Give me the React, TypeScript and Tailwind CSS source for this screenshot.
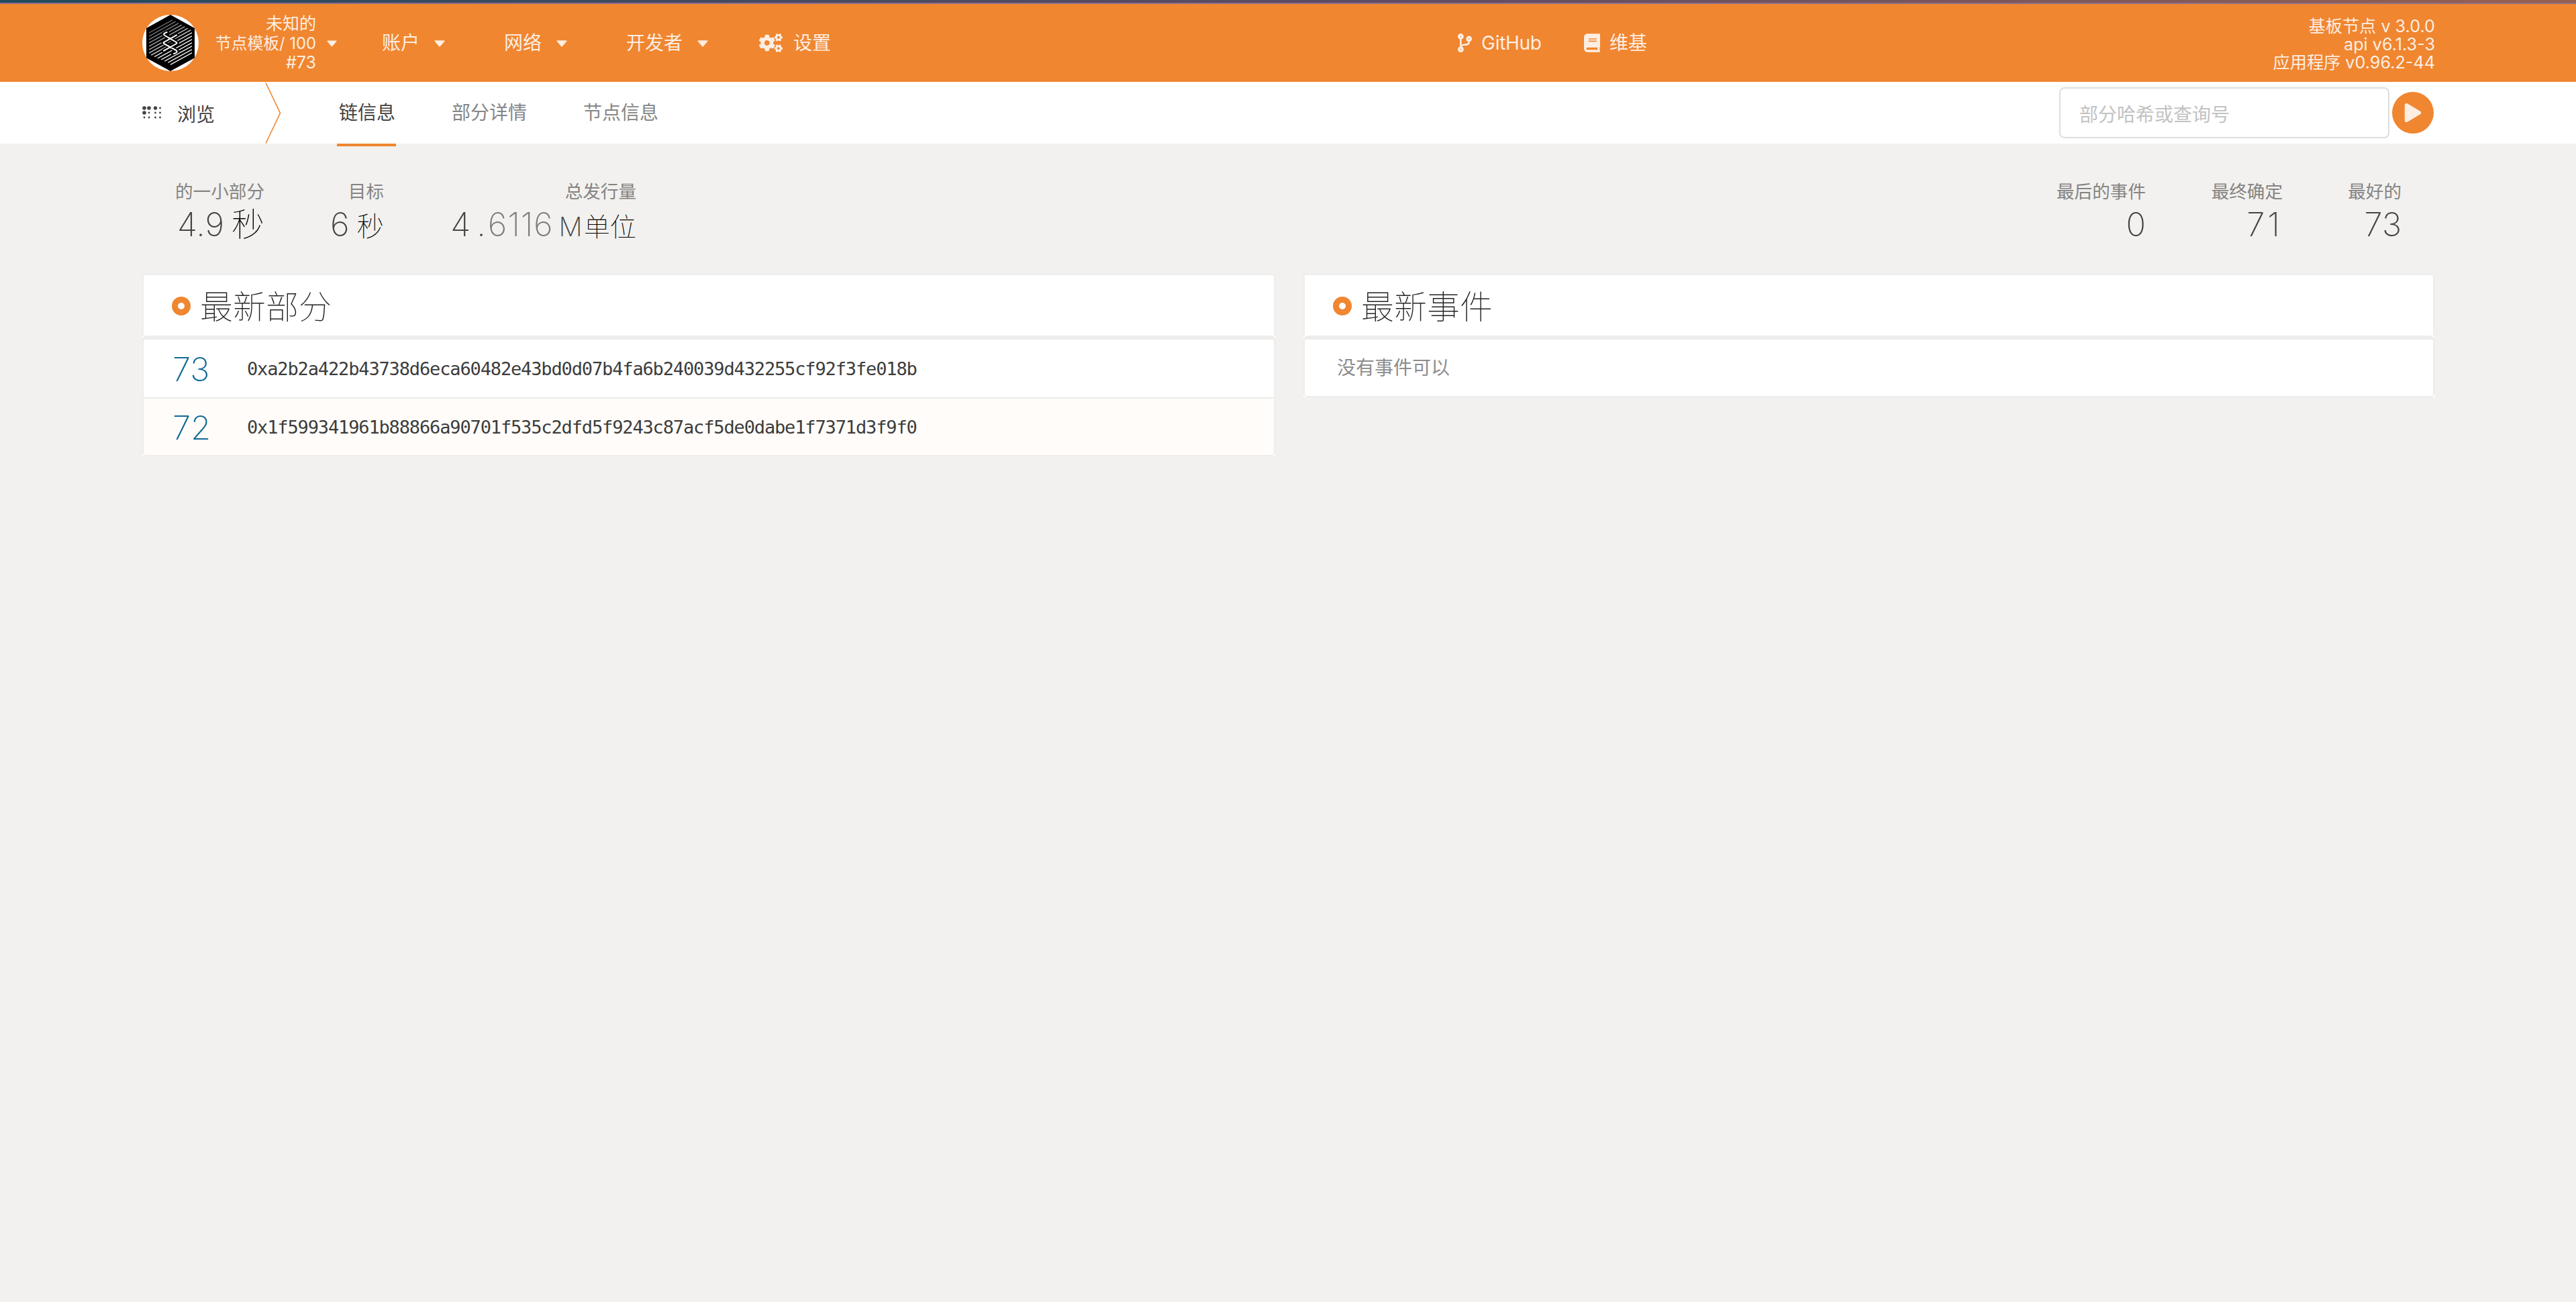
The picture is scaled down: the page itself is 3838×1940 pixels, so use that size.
import type { ReactNode } from "react";
import { FaBook, FaCodeBranch, FaCogs, FaPlay } from "react-icons/fa";

const tabs = [
  { name: "链信息", active: true },
  { name: "部分详情", active: false },
  { name: "节点信息", active: false },
];

const blocks = [
  { number: 73, hash: "0xa2b2a422b43738d6eca60482e43bd0d07b4fa6b240039d432255cf92f3fe018b" },
  { number: 72, hash: "0x1f599341961b88866a90701f535c2dfd5f9243c87acf5de0dabe1f7371d3f9f0" },
];

const brailleDots = [
  [3, 3, 2.8],
  [10, 3, 2.8],
  [19.5, 3, 2.7],
  [26.5, 3, 1.4],
  [3, 10, 2.8],
  [10, 10, 1.4],
  [19.5, 10, 1.4],
  [26.5, 10, 1.4],
  [3, 17, 1.4],
  [10, 17, 1.4],
  [19.5, 17, 1.4],
  [26.5, 17, 1.4],
];

function NodeLogo() {
  const stripes = Array.from({ length: 18 }, (_, i) => 17 + i * 5);
  return (
    <svg className="size-[84px] shrink-0" viewBox="0 0 84 84" fill="none">
      <defs>
        <clipPath id="hex">
          <path d="M42 6 74 23.5V59L42 77.5V73L10 59V23.5Z" />
        </clipPath>
        <linearGradient id="fade" x1="18" y1="8" x2="44" y2="50" gradientUnits="userSpaceOnUse">
          <stop offset="0" stopColor="#333" />
          <stop offset="1" stopColor="#fff" />
        </linearGradient>
      </defs>
      <circle cx="42" cy="42" r="42" fill="#fff" />
      <path d="M42 0 78 20V64.3L42 84 6 64.3V20Z" fill="#000" />
      <g clipPath="url(#hex)" stroke="url(#fade)" strokeWidth="1.3">
        {stripes.map((y) => (
          <path key={y} d={`M8 ${y + 1}L76 ${y - 36.4}`} />
        ))}
      </g>
      <g strokeLinecap="round" strokeLinejoin="round">
        <path
          d="M36.7 26 31.7 28.7 51.7 41.7 31.7 53.7M51 30.3 31.7 41.7 52 54.3 46 57.7"
          stroke="#000"
          strokeWidth="6"
        />
        <path
          d="M36.7 26 Q30 28 33 30.5L50 40.5Q53 42 50 43.5L32 53.7M51 30.3 33 40.5Q30 42 33 43.5L50.5 53Q54 56 47 58"
          stroke="#fff"
          strokeWidth="2"
        />
      </g>
    </svg>
  );
}

function Caret({ className }: { className: string }) {
  return (
    <svg className={className} viewBox="0 0 16 10" fill="currentColor" stroke="currentColor">
      <path d="M1.2 1h13.6L8 9Z" strokeWidth="1.4" strokeLinejoin="round" />
    </svg>
  );
}

function MenuItem({ label, className }: { label: string; className: string }) {
  return (
    <div className={`flex items-center ${className}`}>
      <span>{label}</span>
      <Caret className="ml-[22px] mt-0.5 w-4 h-2.5" />
    </div>
  );
}

function Stat({ label, className, children }: { label: string; className: string; children: ReactNode }) {
  return (
    <div className={`flex flex-col items-end whitespace-nowrap ${className}`}>
      <div className="text-[26.6px] leading-[30px] text-[#858483]">{label}</div>
      <div className="mt-[5px] flex items-baseline text-[49px] leading-[60px] font-extralight text-[#444]">
        {children}
      </div>
    </div>
  );
}

function Panel({ title, className, children }: { title: string; className: string; children: ReactNode }) {
  return (
    <section className={`bg-white ${className}`}>
      <header className="flex h-[92px] items-center border-x-2 border-t-2 border-[#eeedeb] pt-0.5 pl-[42px]">
        <span className="size-7 rounded-full border-[9.5px] border-[#f08630]" />
        <h1 className="ml-[14px] pt-[3px] text-[49px] leading-[60px] font-thin text-[#222]">{title}</h1>
      </header>
      <div className="overflow-hidden rounded-md border-2 border-t-[6px] border-[#eeedeb]">{children}</div>
    </section>
  );
}

export default function App() {
  return (
    <div className="h-[1940px] w-[3838px] overflow-hidden bg-[#f2f1ef] font-['Inter','Noto_Sans_CJK_SC',sans-serif] text-[28px] leading-8 text-[#4e4e4e]">
      <div className="h-1 bg-linear-to-r from-[#1f4a5c] via-[#5c4a64] to-[#96604f]" />
      <div className="h-0.5 bg-[#8f7089]" />

      <header className="flex h-[116px] items-center bg-[#f08630] pr-[210px] pl-[212px] whitespace-nowrap text-[#feeee2]">
        <NodeLogo />
        <div className="w-[175px] text-right text-[25px] leading-[29px]">
          <div>未知的</div>
          <div className="text-[23.8px]">节点模板/ 100</div>
          <div>#73</div>
        </div>
        <Caret className="ml-4 mt-0.5 w-[15px] h-2.5" />
        <MenuItem label="账户" className="ml-[67px]" />
        <MenuItem label="网络" className="ml-[88px]" />
        <MenuItem label="开发者" className="ml-[88px]" />
        <div className="ml-[76px] flex items-center">
          <FaCogs className="h-7 w-[35px]" />
          <span className="ml-4">设置</span>
        </div>
        <div className="ml-[934px] flex items-center">
          <FaCodeBranch className="h-7 w-[21px]" />
          <span className="ml-[14px] w-[91px] tracking-[-0.01em]">GitHub</span>
        </div>
        <div className="ml-[62px] flex items-center">
          <FaBook className="h-7 w-6" />
          <span className="ml-[14px]">维基</span>
        </div>
        <div className="ml-auto pt-1 text-right text-[25.2px] leading-[27px]">
          <div>基板节点 v 3.0.0</div>
          <div>api v6.1.3-3</div>
          <div>应用程序 v0.96.2-44</div>
        </div>
      </header>

      <nav className="flex h-[92px] items-center bg-white px-[212px] whitespace-nowrap">
        <svg className="h-5 w-7" viewBox="0 0 28 20" fill="#434343">
          {brailleDots.map(([x, y, r]) => (
            <circle key={`${x}-${y}`} cx={x} cy={y} r={r} />
          ))}
        </svg>
        <span className="ml-6 pt-[5px] text-[#434343]">浏览</span>
        <svg className="ml-[75px] h-[92px] w-6" viewBox="0 0 24 92" fill="none">
          <path d="M1 1.5 22.5 46.5 1 91.5" stroke="#f08630" strokeWidth="1.6" />
        </svg>
        <div className="ml-[83px] flex gap-[80px]">
          {tabs.map((tab) => (
            <div
              key={tab.name}
              className={
                tab.active
                  ? "relative pr-px pl-[3px] text-[#434343] after:absolute after:inset-x-0 after:top-[62px] after:h-1 after:bg-[#f08630]"
                  : "pr-px pl-[3px] text-[#868686]"
              }
            >
              {tab.name}
            </div>
          ))}
        </div>
        <input
          className="ml-auto h-[76px] w-[492px] rounded-lg border-2 border-[#dededf] pl-7 pt-[5px] placeholder:text-[#c2c2c3]"
          placeholder="部分哈希或查询号"
        />
        <button className="ml-1 flex size-[62px] items-center justify-center rounded-full bg-[#f08630] text-[#feeee2]">
          <FaPlay className="h-7 w-[26px]" />
        </button>
      </nav>

      <div className="flex h-[194px] px-[212px] pt-[56px]">
        <Stat label="的一小部分" className="w-[182px]">
          <span className="mr-[11px]">4.9</span>
          <span className="font-thin text-black">秒</span>
        </Stat>
        <Stat label="目标" className="w-[178px]">
          <span className="mr-[11px]">6</span>
          <span className="text-[40.5px] font-thin text-black">秒</span>
        </Stat>
        <Stat label="总发行量" className="w-[376px]">
          <span>4</span>
          <span className="ml-[9px]">.</span>
          <span className="ml-[3px] tracking-[0.8px] text-[#7c7c7c]">6116</span>
          <span className="ml-2 text-[39.2px]">
            M<span className="ml-0.5 font-thin text-black">单位</span>
          </span>
        </Stat>
        <Stat label="最后的事件" className="ml-auto w-[141px]">
          0
        </Stat>
        <Stat label="最终确定" className="w-[204px]">
          <span className="tracking-[4px]">71</span>
        </Stat>
        <Stat label="最好的" className="mr-12 w-[177px]">
          73
        </Stat>
      </div>

      <main className="flex items-start gap-[42px] pr-[211px] pl-[212px]">
        <Panel title="最新部分" className="w-[1688px]">
          {blocks.map((block) => (
            <div
              key={block.number}
              className="flex h-[84px] items-center border-[#eeedeb] pl-[43px] first:h-[88px] first:border-b-2 even:bg-[#fffcf9]"
            >
              <a className="w-[111px] pt-1 text-[49px] leading-[60px] font-extralight text-[#116a96]">
                {block.number}
              </a>
              <span className="pt-px font-['DejaVu_Sans_Mono',monospace] text-[27px] tracking-[-1.14px] text-[#3c3c3c]">
                {block.hash}
              </span>
            </div>
          ))}
        </Panel>
        <Panel title="最新事件" className="flex-1">
          <div className="flex h-[84px] items-center pl-12 text-[#8d8d8d]">没有事件可以</div>
        </Panel>
      </main>
    </div>
  );
}
